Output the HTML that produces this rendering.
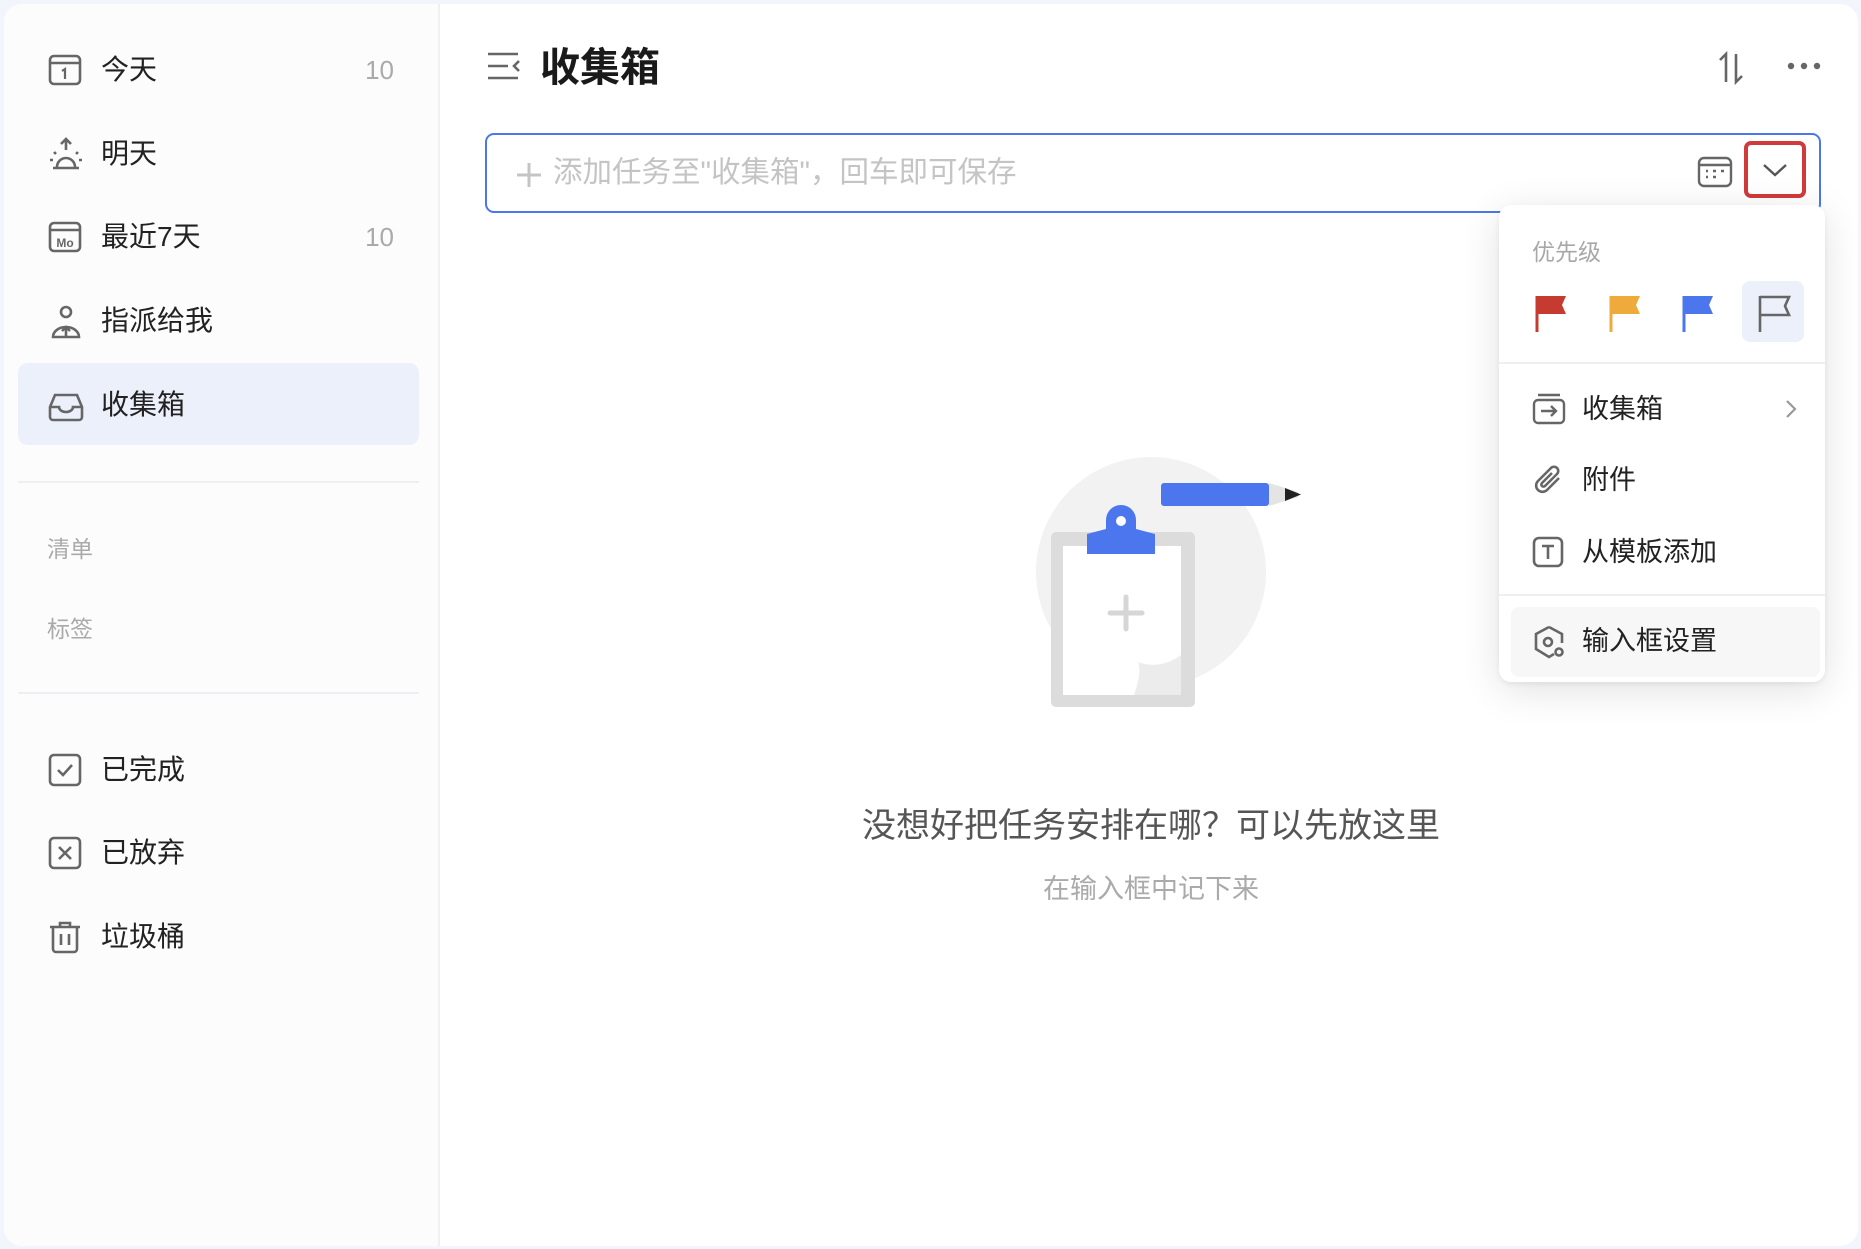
<!DOCTYPE html>
<html><head><meta charset="utf-8"><style>
*{margin:0;padding:0;box-sizing:border-box}
body{width:1861px;height:1249px;background:#f2f5fc;font-family:"Liberation Sans","Noto Sans CJK SC",sans-serif;position:relative;overflow:hidden}
.card{position:absolute;left:4px;top:4px;width:1854px;height:1242px;background:#fff;border-radius:18px;overflow:hidden}
.side{position:absolute;left:0;top:0;width:436px;height:100%;background:#fcfcfd;border-right:2px solid #f0f0f2}
.abs{position:absolute}
.item{position:absolute;left:0;width:436px;height:60px;font-size:28px;color:#222;line-height:60px}
.item svg{position:absolute;left:43px;top:12px}
.item .t{position:absolute;left:97px}
.item .c{position:absolute;right:46px;color:#aaa;font-size:26px}
.hr{position:absolute;height:2px;background:#eeeff2}
.gray{color:#aaa;font-size:23px}
.mi{position:absolute;left:0;width:100%;height:60px;line-height:60px;font-size:27px;color:#222}
.mi svg{position:absolute;left:33px;top:14px}
.mi .t{position:absolute;left:83px}
</style></head><body>
<div class="card">
<div class="side">
 <div class="abs" style="left:14px;top:359px;width:401px;height:82px;background:#ecf0fb;border-radius:10px"></div>
 <div class="item" style="top:36px"><svg width="36" height="36" viewBox="0 0 36 36" fill="none" stroke="#666" stroke-width="2.6"><rect x="3" y="4" width="30" height="28" rx="4"/><line x1="3" y1="11" x2="33" y2="11"/><path d="M15 19l3-2v10" stroke-width="2.2"/></svg><span class="t">今天</span><span class="c">10</span></div>
 <div class="item" style="top:120px"><svg width="38" height="38" viewBox="0 0 38 38" fill="none" stroke="#666" stroke-width="2.6"><path d="M19 4v10M14 8l5-5 5 5"/><path d="M10 31a9 9 0 0 1 18 0"/><path d="M6 32h26M3 24h3M32 24h3M7 16l2 2M31 16l-2 2"/></svg><span class="t">明天</span></div>
 <div class="item" style="top:203px"><svg width="36" height="36" viewBox="0 0 36 36" fill="none" stroke="#666" stroke-width="2.6"><rect x="3" y="4" width="30" height="28" rx="4"/><line x1="3" y1="11" x2="33" y2="11"/><text x="18" y="28" font-size="12" text-anchor="middle" fill="#666" stroke="none" font-family="Liberation Sans" font-weight="bold">Mo</text></svg><span class="t">最近7天</span><span class="c">10</span></div>
 <div class="item" style="top:287px"><svg width="38" height="38" viewBox="0 0 38 38" fill="none" stroke="#666" stroke-width="2.6"><circle cx="19" cy="9" r="5"/><path d="M6 34a13 10 0 0 1 26 0z M19 33v-9M15 28l4-4 4 4"/></svg><span class="t">指派给我</span></div>
 <div class="item" style="top:371px"><svg width="38" height="38" viewBox="0 0 38 38" fill="none" stroke="#666" stroke-width="2.6"><path d="M3 20l5-12h22l5 12v10a3 3 0 0 1-3 3H6a3 3 0 0 1-3-3z"/><path d="M3 20h9a7 5 0 0 0 14 0h9"/></svg><span class="t">收集箱</span></div>
 <div class="hr" style="left:14px;top:477px;width:401px"></div>
 <div class="abs gray" style="left:43px;top:526px">清单</div>
 <div class="abs gray" style="left:43px;top:606px">标签</div>
 <div class="hr" style="left:14px;top:688px;width:401px"></div>
 <div class="item" style="top:736px"><svg width="36" height="36" viewBox="0 0 36 36" fill="none" stroke="#666" stroke-width="2.6"><rect x="3" y="3" width="30" height="30" rx="4"/><path d="M11 18l5 5 9-10"/></svg><span class="t">已完成</span></div>
 <div class="item" style="top:819px"><svg width="36" height="36" viewBox="0 0 36 36" fill="none" stroke="#666" stroke-width="2.6"><rect x="3" y="3" width="30" height="30" rx="4"/><path d="M12 12l12 12M24 12L12 24"/></svg><span class="t">已放弃</span></div>
 <div class="item" style="top:903px"><svg width="36" height="36" viewBox="0 0 36 36" fill="none" stroke="#666" stroke-width="2.6"><path d="M3 8h30M13 8V4h10v4"/><path d="M6 8v22a3 3 0 0 0 3 3h18a3 3 0 0 0 3-3V8"/><path d="M14 15v11M22 15v11"/></svg><span class="t">垃圾桶</span></div>
</div>

<!-- header -->
<svg class="abs" style="left:482px;top:46px" width="36" height="32" viewBox="0 0 36 32" fill="none" stroke="#666" stroke-width="2.6"><path d="M2 4h30M2 16h20M2 28h30M33 11l-5 5 5 5"/></svg>
<div class="abs" style="left:536px;top:31px;font-size:40px;font-weight:bold;color:#1a1a1a">收集箱</div>
<svg class="abs" style="left:1712px;top:46px" width="30" height="36" viewBox="0 0 30 36" fill="none" stroke="#666" stroke-width="2.6"><path d="M10 32V4L4 10M20 4v28l6-6"/></svg>
<svg class="abs" style="left:1782px;top:57px" width="36" height="10" viewBox="0 0 36 10" fill="#666"><circle cx="5" cy="5" r="3.2"/><circle cx="18" cy="5" r="3.2"/><circle cx="31" cy="5" r="3.2"/></svg>

<!-- input -->
<div class="abs" style="left:481px;top:129px;width:1336px;height:80px;border:2px solid #4c76ee;border-radius:9px"></div>
<svg class="abs" style="left:512px;top:158px" width="26" height="26" viewBox="0 0 26 26" stroke="#c4c4c4" stroke-width="3"><path d="M13 1v24M1 13h24"/></svg>
<div class="abs" style="left:549px;top:150px;font-size:29.5px;color:#c4c4c4;line-height:38px">添加任务至"收集箱"，回车即可保存</div>
<svg class="abs" style="left:1693px;top:152px" width="36" height="32" viewBox="0 0 36 32" fill="none" stroke="#666" stroke-width="2.4"><rect x="2" y="2" width="32" height="28" rx="5"/><line x1="2" y1="9" x2="34" y2="9"/><g stroke-width="2.6"><path d="M9 15h2M16 15h3M24 15h3M9 21h2M16 21h3"/></g></svg>
<div class="abs" style="left:1740px;top:137px;width:62px;height:57px;border:4px solid #d13a3a;border-radius:7px"></div>
<svg class="abs" style="left:1758px;top:158px" width="26" height="16" viewBox="0 0 26 16" fill="none" stroke="#555" stroke-width="2.4"><path d="M2 3l11 10 11-10"/></svg>

<!-- illustration -->
<svg class="abs" style="left:1026px;top:446px" width="290" height="270" viewBox="0 0 290 270">
<circle cx="121" cy="122" r="115" fill="#f2f2f2"/>
<rect x="21" y="82" width="144" height="175" rx="5" fill="#dcdcdc"/>
<rect x="33" y="96" width="118" height="149" fill="#fff"/>
<path d="M151 205 L151 245 L104 245 Q112 222 108 212 Q130 220 151 205z" fill="#ececec"/>
<path d="M96 147v32M80 163h32" stroke="#d6d6d6" stroke-width="5" stroke-linecap="round"/>
<path d="M57 84 L76 79 V70 a15 15 0 0 1 30 0 V79 L125 84 V104 H57z" fill="#4c76ee"/>
<circle cx="91" cy="71" r="5" fill="#fff"/>
<rect x="131" y="33" width="108" height="23" rx="3" fill="#4c76ee"/>
<path d="M239 33 L268 42 L268 47 L239 56z" fill="#e4e4e4"/>
<path d="M255 38 L271 44.5 L255 51z" fill="#222"/>
</svg>
<div class="abs" style="left:636px;top:794px;width:1022px;text-align:center;font-size:34px;color:#555">没想好把任务安排在哪？可以先放这里</div>
<div class="abs" style="left:636px;top:863px;width:1022px;text-align:center;font-size:27px;color:#aaa">在输入框中记下来</div>

<!-- popup -->
<div class="abs" style="left:1495px;top:201px;width:326px;height:477px;background:#fff;border-radius:12px;box-shadow:0 8px 40px rgba(0,0,0,0.12),0 2px 6px rgba(0,0,0,0.06)">
 <div class="abs gray" style="left:33px;top:28px;font-size:23px;color:#a8a8a8">优先级</div>
 <div class="abs" style="left:243px;top:76px;width:62px;height:61px;background:#ecf0fb;border-radius:8px"></div>
 <svg class="abs" style="left:36px;top:89px" width="36" height="40" viewBox="0 0 36 40"><path d="M2 2v36" stroke="#c53b30" stroke-width="3"/><path d="M2 2h29l-4 9 4 9H2z" fill="#c53b30"/></svg>
 <svg class="abs" style="left:110px;top:89px" width="36" height="40" viewBox="0 0 36 40"><path d="M2 2v36" stroke="#efaa3c" stroke-width="3"/><path d="M2 2h29l-4 9 4 9H2z" fill="#efaa3c"/></svg>
 <svg class="abs" style="left:183px;top:89px" width="36" height="40" viewBox="0 0 36 40"><path d="M2 2v36" stroke="#4c76ee" stroke-width="3"/><path d="M2 2h29l-4 9 4 9H2z" fill="#4c76ee"/></svg>
 <svg class="abs" style="left:258px;top:89px" width="36" height="40" viewBox="0 0 36 40" fill="none" stroke="#666" stroke-width="2.6"><path d="M3 2v36M3 3h29l-4 9 4 9H3"/></svg>
 <div class="hr" style="left:0;top:157px;width:100%;background:#f0f0f0"></div>
 <div class="mi" style="top:174px"><svg width="34" height="32" viewBox="0 0 34 32" fill="none" stroke="#666" stroke-width="2.4"><path d="M6 2h22"/><rect x="2" y="7" width="30" height="23" rx="4"/><path d="M9 18h15M19 13l5 5-5 5"/></svg><span class="t">收集箱</span><svg style="left:286px;top:20px" width="12" height="20" viewBox="0 0 12 20" fill="none" stroke="#999" stroke-width="2.2"><path d="M2 2l8 8-8 8"/></svg></div>
 <div class="mi" style="top:245px"><svg width="34" height="34" viewBox="0 0 34 34" fill="none" stroke="#666" stroke-width="2.6"><path d="M27 14L15 26a6 6 0 0 1-9-9L19 4a4 4 0 0 1 6 6L13 22a2 2 0 0 1-3-3l10-10"/></svg><span class="t">附件</span></div>
 <div class="mi" style="top:317px"><svg width="32" height="32" viewBox="0 0 32 32" fill="none" stroke="#666" stroke-width="2.6"><rect x="2" y="2" width="28" height="28" rx="5"/><path d="M10 10h12M16 10v13"/></svg><span class="t">从模板添加</span></div>
 <div class="hr" style="left:0;top:389px;width:100%;background:#f0f0f0"></div>
 <div class="abs" style="left:12px;top:402px;width:309px;height:70px;background:#f7f7f7;border-radius:8px"></div>
 <div class="mi" style="top:406px"><svg width="34" height="34" viewBox="0 0 34 34" fill="none" stroke="#666" stroke-width="2.6"><path d="M17 2l13 7v9M17 2L4 9v15l13 8 5-3"/><circle cx="16" cy="17" r="4"/><circle cx="27" cy="27" r="3.5"/></svg><span class="t">输入框设置</span></div>
</div>
</div>
</body></html>
